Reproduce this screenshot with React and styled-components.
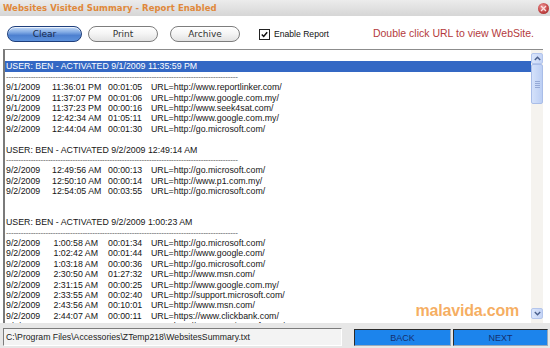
import React from "react";
import styled, { createGlobalStyle } from "styled-components";

const GlobalStyle = createGlobalStyle`
  html, body { margin: 0; padding: 0; background: #fff; }
  body { width: 550px; height: 348px; overflow: hidden; }
`;

const Window = styled.div`
  width: 550px;
  height: 348px;
  display: flex;
  flex-direction: column;
  background: #fff;
  font-family: "Liberation Sans", Arial, sans-serif;
  overflow: hidden;
`;

const TitleBar = styled.div`
  height: 16px;
  flex: none;
  display: flex;
  align-items: center;
  justify-content: space-between;
  padding: 0 1px 0 3px;
  background: linear-gradient(#ececec, #d6d6d6);
`;

const Title = styled.div`
  font-family: "DejaVu Sans", Verdana, sans-serif;
  font-weight: bold;
  font-size: 8.5px;
  color: #e0883a;
  letter-spacing: 0.05px;
`;

const CloseBtn = styled.div`
  width: 11px;
  height: 11px;
  border-radius: 50%;
  background: radial-gradient(circle at 40% 35%, #f09a9a, #c44646 55%, #8e2a2a);
  display: flex;
  align-items: center;
  justify-content: center;
`;

const Toolbar = styled.div`
  height: 33px;
  flex: none;
  display: flex;
  align-items: center;
  padding: 3px 0 0 7px;
  box-sizing: border-box;
`;

const Pill = styled.button`
  width: ${(p) => p.$w}px;
  height: 16px;
  margin: 0 ${(p) => p.$mr}px 0 0;
  padding: 0;
  border-radius: 8px;
  font-family: "DejaVu Sans", Verdana, sans-serif;
  font-size: 9px;
  cursor: pointer;
  border: 1px solid ${(p) => (p.$primary ? "#1f3f7c" : "#7d7d7d")};
  color: ${(p) => (p.$primary ? "#182a4e" : "#333")};
  background: ${(p) =>
    p.$primary
      ? "linear-gradient(#c5daf6 0%, #86aee6 35%, #4d80d0 60%, #5d92dc 100%)"
      : "linear-gradient(#ffffff 0%, #f4f4f4 50%, #e2e2e2 100%)"};
  box-shadow: inset 0 1px 0 rgba(255, 255, 255, 0.7);
`;

const CheckWrap = styled.label`
  display: flex;
  align-items: center;
  margin-left: 7px;
  font-size: 8.6px;
  color: #111;
`;

const Box = styled.span`
  width: 9px;
  height: 9px;
  border: 1px solid #222;
  background: #fff;
  margin-right: 4px;
  display: flex;
  align-items: center;
  justify-content: center;
`;

const Hint = styled.div`
  margin-left: auto;
  margin-right: 16px;
  margin-top: -2px;
  font-size: 10.5px;
  color: #b43a3c;
`;

const ListArea = styled.div`
  height: 273px;
  flex: none;
  margin: 0 7px 0 3px;
  border-top: 1px solid #8c8c8c;
  border-left: 2px solid #7a7a7a;
  display: flex;
  position: relative;
`;

const Content = styled.div`
  flex: 1;
  overflow: hidden;
  padding-top: 1px;
  font-size: 8.8px;
  line-height: 10.4px;
  color: #151515;
`;

const Line = styled.div`
  height: 10.4px;
  padding-left: 1px;
  white-space: nowrap;
  background: ${(p) => (p.$selected ? "#3468c4" : "transparent")};
  color: ${(p) => (p.$selected ? "#fff" : "inherit")};
`;

const Dashes = styled(Line)`
  color: #555;
  font-size: 8px;
  letter-spacing: -0.2px;
`;

const Row = styled.div`
  height: 10.4px;
  padding-left: 1px;
  display: grid;
  grid-template-columns: 46px 46px 53px 1fr;
  white-space: nowrap;
`;

const Time = styled.span`
  text-align: right;
`;

const Dur = styled.span`
  padding-left: 10px;
`;

const Scrollbar = styled.div`
  width: 12px;
  flex: none;
  display: flex;
  flex-direction: column;
  background: #f5f3ef;
  padding: 3px 0 4px;
  box-sizing: border-box;
`;

const ScrollBtn = styled.div`
  height: 11px;
  flex: none;
  border: 1px solid #b3c5ec;
  border-radius: 2px;
  background: linear-gradient(90deg, #dbe6fb, #c4d4f6);
  display: flex;
  align-items: center;
  justify-content: center;
  box-sizing: border-box;
`;

const Thumb = styled.div`
  height: 40px;
  flex: none;
  border: 1px solid #a9bde8;
  border-radius: 2px;
  background: linear-gradient(90deg, #d4e1fa, #bccff4);
  display: flex;
  flex-direction: column;
  align-items: center;
  justify-content: center;
  gap: 1px;
  box-sizing: border-box;
`;

const Grip = styled.span`
  width: 5px;
  height: 1px;
  background: #95a9d6;
`;

const Track = styled.div`
  flex: 1;
`;

const Watermark = styled.div`
  position: absolute;
  right: 24px;
  bottom: 3px;
  font-family: "Liberation Sans", Arial, sans-serif;
  font-weight: bold;
  font-size: 16px;
  color: rgba(244, 160, 70, 0.85);
  letter-spacing: -0.2px;
`;

const StatusBar = styled.div`
  flex: 1;
  display: flex;
  align-items: flex-end;
  padding: 0 2px 2px 3px;
  background: #e7e7e7;
`;

const PathBox = styled.div`
  width: 339px;
  height: 18px;
  box-sizing: border-box;
  border: 1px solid;
  border-color: #7c7c7c #ffffff #ffffff #7c7c7c;
  background: #f3f3f3;
  font-size: 8.7px;
  color: #222;
  display: flex;
  align-items: center;
  padding-left: 2px;
  margin-right: 12px;
`;

const NavBtn = styled.button`
  width: ${(p) => p.$w}px;
  height: 17px;
  margin: 0 ${(p) => p.$mr}px 0 0;
  padding: 0;
  border: 1px solid;
  border-color: #2a2a2a #9ab #9ab #2a2a2a;
  background: #1c84ec;
  color: #15306e;
  font-family: "Liberation Sans", Arial, sans-serif;
  font-size: 9px;
`;

const rows1 = [
  ["9/1/2009", "11:36:01 PM", "00:01:05", "URL=http://www.reportlinker.com/"],
  ["9/1/2009", "11:37:07 PM", "00:01:06", "URL=http://www.google.com.my/"],
  ["9/1/2009", "11:37:23 PM", "00:00:16", "URL=http://www.seek4sat.com/"],
  ["9/2/2009", "12:42:34 AM", "01:05:11", "URL=http://www.google.com.my/"],
  ["9/2/2009", "12:44:04 AM", "00:01:30", "URL=http://go.microsoft.com/"],
];
const rows2 = [
  ["9/2/2009", "12:49:56 AM", "00:00:13", "URL=http://go.microsoft.com/"],
  ["9/2/2009", "12:50:10 AM", "00:00:14", "URL=http://www.p1.com.my/"],
  ["9/2/2009", "12:54:05 AM", "00:03:55", "URL=http://go.microsoft.com/"],
];
const rows3 = [
  ["9/2/2009", "1:00:58 AM", "00:01:34", "URL=http://go.microsoft.com/"],
  ["9/2/2009", "1:02:42 AM", "00:01:44", "URL=http://www.google.com/"],
  ["9/2/2009", "1:03:18 AM", "00:00:36", "URL=http://go.microsoft.com/"],
  ["9/2/2009", "2:30:50 AM", "01:27:32", "URL=http://www.msn.com/"],
  ["9/2/2009", "2:31:15 AM", "00:00:25", "URL=http://www.google.com.my/"],
  ["9/2/2009", "2:33:55 AM", "00:02:40", "URL=http://support.microsoft.com/"],
  ["9/2/2009", "2:43:56 AM", "00:10:01", "URL=http://www.msn.com/"],
  ["9/2/2009", "2:44:07 AM", "00:00:11", "URL=https://www.clickbank.com/"],
  ["9/2/2009", "2:47:11 AM", "00:03:04", "URL=http://support.microsoft.com/"],
];

const DASH = "-".repeat(94);

function Rows({ data }) {
  return data.map((r, i) => (
    <Row key={i}>
      <span>{r[0]}</span>
      <Time>{r[1]}</Time>
      <Dur>{r[2]}</Dur>
      <span>{r[3]}</span>
    </Row>
  ));
}

export default function App() {
  return (
    <>
      <GlobalStyle />
      <Window>
        <TitleBar>
          <Title>Websites Visited Summary - Report Enabled</Title>
          <CloseBtn>
            <svg width="7" height="7" viewBox="0 0 7 7">
              <path d="M1 1L6 6M6 1L1 6" stroke="#fbe0e0" strokeWidth="1.3" />
            </svg>
          </CloseBtn>
        </TitleBar>
        <Toolbar>
          <Pill $primary $w={75} $mr={6}>Clear</Pill>
          <Pill $w={70} $mr={12}>Print</Pill>
          <Pill $w={70} $mr={12}>Archive</Pill>
          <CheckWrap>
            <Box>
              <svg width="7" height="7" viewBox="0 0 7 7">
                <path d="M0.8 3.4L2.7 5.4L6.2 1.2" stroke="#111" strokeWidth="1.5" fill="none" />
              </svg>
            </Box>
            Enable Report
          </CheckWrap>
          <Hint>Double click URL to view WebSite.</Hint>
        </Toolbar>
        <ListArea>
          <Content>
            <Line />
            <Line $selected>USER: BEN - ACTIVATED 9/1/2009 11:35:59 PM</Line>
            <Dashes>{DASH}</Dashes>
            <Rows data={rows1} />
            <Line />
            <Line>USER: BEN - ACTIVATED 9/2/2009 12:49:14 AM</Line>
            <Dashes>{DASH}</Dashes>
            <Rows data={rows2} />
            <Line />
            <Line />
            <Line>USER: BEN - ACTIVATED 9/2/2009 1:00:23 AM</Line>
            <Dashes>{DASH}</Dashes>
            <Rows data={rows3} />
          </Content>
          <Scrollbar>
            <ScrollBtn>
              <svg width="7" height="5" viewBox="0 0 7 5">
                <path d="M0.8 4L3.5 1.3L6.2 4" stroke="#4a5f8c" strokeWidth="1.4" fill="none" />
              </svg>
            </ScrollBtn>
            <Thumb>
              <Grip />
              <Grip />
              <Grip />
              <Grip />
            </Thumb>
            <Track />
            <ScrollBtn>
              <svg width="7" height="5" viewBox="0 0 7 5">
                <path d="M0.8 1L3.5 3.7L6.2 1" stroke="#4a5f8c" strokeWidth="1.4" fill="none" />
              </svg>
            </ScrollBtn>
          </Scrollbar>
          <Watermark>malavida.com</Watermark>
        </ListArea>
        <StatusBar>
          <PathBox>C:\Program Files\Accessories\ZTemp218\WebsitesSummary.txt</PathBox>
          <NavBtn $w={97} $mr={2}>BACK</NavBtn>
          <NavBtn $w={95} $mr={0}>NEXT</NavBtn>
        </StatusBar>
      </Window>
    </>
  );
}
